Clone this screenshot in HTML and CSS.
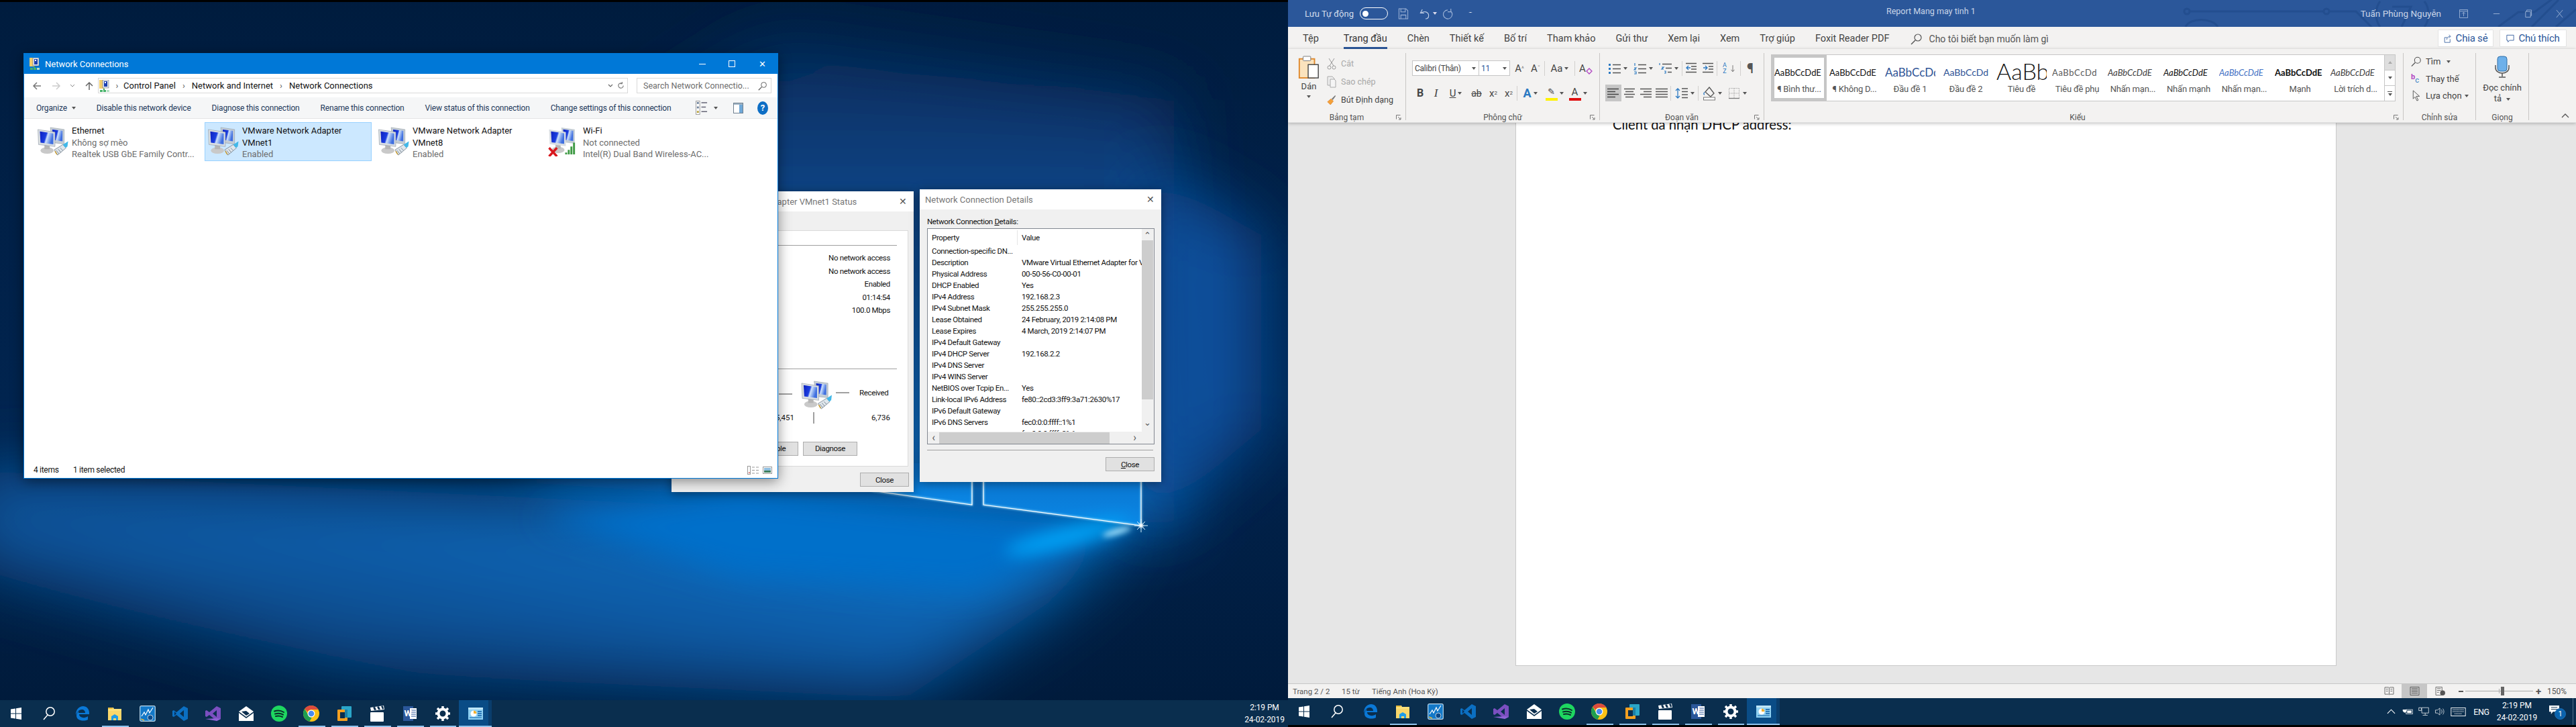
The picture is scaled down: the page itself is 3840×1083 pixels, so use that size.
FILE: index.html
```html
<!DOCTYPE html>
<html lang="vi">
<head>
<meta charset="utf-8">
<title>Network Connections and Word</title>
<link rel="stylesheet" href="styles.css">
</head>
<body>
<svg class="defs" width="0" height="0" aria-hidden="true">
<defs>
<linearGradient id="scr" x1="0" y1="0" x2="1" y2="0.3"><stop offset="0" stop-color="#0a1fc0"/><stop offset=".5" stop-color="#1c3fe0"/><stop offset=".62" stop-color="#cfe2fb"/><stop offset="1" stop-color="#3f6fe0"/></linearGradient>
<symbol id="net" viewBox="0 0 48 46">
<polygon points="20,2 41,5 41,27 23,25" fill="#c5ced6" stroke="#8e99a3" stroke-width=".6"/><polygon points="23,5 38.5,7 38.5,23 24,21" fill="url(#scr)"/>
<ellipse cx="15" cy="37" rx="10" ry="5" fill="#c9c9c9"/><rect x="11" y="28" width="8" height="7" fill="#b5b5b5"/>
<polygon points="1,5 27,9 27,31 2,28" fill="#d8dde2" stroke="#8e99a3" stroke-width=".6"/><polygon points="4,8 24.5,11 24.5,27.5 5,25" fill="url(#scr)"/>
<polygon points="26,36 39,28 44,33 31,44" fill="#dfe6ec" stroke="#6d7a86" stroke-width=".8"/><path d="M29 37l4 5M32 35l4 5M35 33l4 4" stroke="#7d8a96" stroke-width="1"/><polygon points="39,28 47,23 46,31 43,33" fill="#42b8e8"/><path d="M27 38l3 5" stroke="#c99b2c" stroke-width="1.5"/>
</symbol>
<symbol id="cpl" viewBox="0 0 17 18"><rect x="0" y="0" width="7" height="13" fill="#f3cf6d"/><rect x="5" y="0" width="9" height="12" fill="#dfe6ee" stroke="#556" stroke-width=".5"/><rect x="7" y="2" width="5" height="8" fill="#1b3fb0"/><rect x="8" y="3" width="2" height="2" fill="#fff"/><rect x="6" y="13" width="2" height="2" fill="#4aa85f"/><rect x="1" y="15" width="4" height="3" fill="#47b36b"/><rect x="6" y="15" width="4" height="3" fill="#47b36b"/><rect x="11" y="15" width="4" height="3" fill="#b4e0c2"/></symbol>
<symbol id="win" viewBox="0 0 24 24"><polygon points="4,5.5 11,4.5 11,11.5 4,11.5" fill="#fff"/><polygon points="12,4.3 20,3 20,11.5 12,11.5" fill="#fff"/><polygon points="4,12.5 11,12.5 11,19.5 4,18.5" fill="#fff"/><polygon points="12,12.5 20,12.5 20,21 12,19.8" fill="#fff"/></symbol>
<symbol id="srch" viewBox="0 0 24 24"><circle cx="14" cy="9" r="6.2" fill="none" stroke="#fff" stroke-width="1.5"/><path d="M10 14l-6 7" stroke="#fff" stroke-width="1.5"/></symbol>
<symbol id="edge" viewBox="0 0 24 24"><path d="M3 14C3 6 8 1 14 1c5 0 9 4 9 10v2H8c0 5 8 7 13 3v5c-6 3-17 2-17-6 0-3 2-6 4-7-1 1-1 2-1 3h10c0-3-2-5-5-5-5 0-7 4-9 8z" fill="#0a78d7"/></symbol>
<symbol id="expl" viewBox="0 0 24 24"><path d="M2 3h8l1 2h11v17H2z" fill="#fbe07a"/><rect x="2" y="3" width="7" height="2" fill="#e8b93a"/><rect x="2" y="8" width="20" height="14" fill="#f9d76a"/><path d="M7 22v-6l5-3 5 3v6h-3v-3h-4v3z" fill="#1e9ce8"/></symbol>
<symbol id="xtu" viewBox="0 0 24 24"><rect x=".7" y=".7" width="22.6" height="22.6" rx="2" fill="#1278c8" stroke="#bcd9ec" stroke-width="1.2"/><path d="M3 16l4-6 2 4 4-8 2 5 5-8" fill="none" stroke="#fff" stroke-width="1.2"/><circle cx="16" cy="18" r="4" fill="#0b4a8a" stroke="#fff" stroke-width=".7"/><path d="M2 20l5 2" stroke="#e6b73a" stroke-width="1.4"/></symbol>
<symbol id="code" viewBox="0 0 24 24"><path d="M17 1l6 3v16l-6 3L6 14l-4 3-2-1V8l2-1 4 3zM17 7l-6 5 6 5z" fill="#0b6fc2"/><path d="M3 9v6l3-3z" fill="#082f5a"/></symbol>
<symbol id="vs" viewBox="0 0 24 24"><path d="M17 1l6 3v16l-6 3L6 14l-4 3-2-1V8l2-1 4 3zM17 7l-6 5 6 5z" fill="#7b4fc0"/><path d="M0 20l17 3 6-3-6-1z" fill="#8f63d6"/></symbol>
<symbol id="mail" viewBox="0 0 24 24"><path d="M12 1l11 8-11 8L1 9z" fill="#fff"/><path d="M1 11l11 8 11-8v12H1z" fill="#fff"/><path d="M5 9l7-1 5 4-5 3z" fill="#0b2e4e"/></symbol>
<symbol id="spot" viewBox="0 0 24 24"><ellipse cx="12" cy="12" rx="12" ry="12" fill="#1ed760"/><path d="M5 8.5c5-1.5 10-1 14 1.5M6 12.5c4-1 9-.7 12 1.2M7 16c3-.8 7-.5 10 1" fill="none" stroke="#0b2e2a" stroke-width="2" stroke-linecap="round"/></symbol>
<symbol id="chrome" viewBox="0 0 24 24"><circle cx="12" cy="12" r="12" fill="#fbc116"/><path d="M12 0a12 12 0 0 1 10.4 6H12a6 6 0 0 0-5.5 3.6L2.2 5A12 12 0 0 1 12 0z" fill="#dd4b3e"/><path d="M2.2 5l5 8.5a6 6 0 0 0 5.4 4.5L9.500 23.700A12 12 0 0 1 2.200 5z" fill="#1e9e50"/><circle cx="12" cy="12" r="5.500" fill="#fff"/><circle cx="12" cy="12" r="4.300" fill="#4a8bf0"/></symbol>
<symbol id="vmw" viewBox="0 0 24 24"><rect x="8" y="1" width="15" height="17" rx="1" fill="#2aa6c8"/><rect x="2" y="6" width="15" height="17" rx="1" fill="#f5a020"/><rect x="6" y="10" width="7" height="9" fill="#0b2e4e"/><rect x="13" y="6" width="4" height="12" fill="#1d7fa6"/></symbol>
<symbol id="clap" viewBox="0 0 24 24"><rect x="2" y="10" width="20" height="14" rx="1" fill="#fff"/><polygon points="2,3 22,0 23,6 3,8" fill="#fff"/><polygon points="6,2.500 9,2 11,6.600 8,7" fill="#0b2e4e"/><polygon points="12,1.700 15,1.200 17,5.900 14,6.300" fill="#0b2e4e"/><polygon points="18,.800 21,.400 22,5.300 20,5.600" fill="#0b2e4e"/></symbol>
<symbol id="gear" viewBox="0 0 24 24"><circle cx="12" cy="12" r="6.500" fill="none" stroke="#fff" stroke-width="4"/><path d="M12 1v5M12 18v5M1 12h5M18 12h5M4 4l4 4M16 16l4 4M20 4l-4 4M8 16l-4 4" stroke="#fff" stroke-width="3.500"/></symbol>
<symbol id="ctrl" viewBox="0 0 24 24"><rect x="1" y="3" width="22" height="18" fill="#8ed0f2"/><rect x="1" y="3" width="22" height="3" fill="#bfe6f8"/><circle cx="9" cy="12" r="4.500" fill="#fff"/><path d="M9 12V7.500A4.500 4.500 0 0 1 13.500 12z" fill="#f4b02e"/><path d="M15 9h6M15 12h6M15 15h6" stroke="#0e5ea8" stroke-width="1.500"/><path d="M3 18h18" stroke="#0e5ea8"/></symbol>
<symbol id="lines" viewBox="0 0 20 16"><path d="M1 1.500h18M1 5.500h18M1 9.500h18M1 13.500h18" stroke="#555" stroke-width="1.300"/></symbol>
<symbol id="center" viewBox="0 0 20 16"><path d="M2 1.500h16M4 5.500h12M2 9.500h16M4 13.500h12" stroke="#555" stroke-width="1.300"/></symbol>
<symbol id="right" viewBox="0 0 20 16"><path d="M2 1.500h17M7 5.500h12M2 9.500h17M7 13.500h12" stroke="#555" stroke-width="1.300"/></symbol>
<symbol id="left" viewBox="0 0 20 16"><path d="M1 1.500h17M1 5.500h12M1 9.500h17M1 13.500h12" stroke="#444" stroke-width="1.300"/></symbol>
<symbol id="bul" viewBox="0 0 20 18"><rect x="1" y="2" width="3" height="3" fill="#2b79c2"/><rect x="1" y="8" width="3" height="3" fill="#2b79c2"/><rect x="1" y="14" width="3" height="3" fill="#2b79c2"/><path d="M7 3.500h12M7 9.500h12M7 15.500h12" stroke="#555" stroke-width="1.300"/></symbol>
<symbol id="num" viewBox="0 0 20 18"><path d="M2 1v4M1 8h3l-3 3h3M1 14h3v3H1" fill="none" stroke="#2b79c2" stroke-width="1.200"/><path d="M7 3.500h12M7 9.500h12M7 15.500h12" stroke="#555" stroke-width="1.300"/></symbol>
<symbol id="multi" viewBox="0 0 20 18"><path d="M1 1v3M4 7h3l-3 3h3M8 13h2v3H8" fill="none" stroke="#2b79c2" stroke-width="1.200"/><path d="M5 2.500h14M10 8.500h9M13 14.500h6" stroke="#555" stroke-width="1.300"/></symbol>
<symbol id="out" viewBox="0 0 18 18"><path d="M1 1.500h16M9 6h8M9 10h8M1 14.500h16" stroke="#555" stroke-width="1.300"/><path d="M8 8H2m3-3L2 8l3 3" fill="none" stroke="#2b79c2" stroke-width="1.300"/></symbol>
<symbol id="ind" viewBox="0 0 18 18"><path d="M1 1.500h16M10 6h7M10 10h7M1 14.500h16" stroke="#555" stroke-width="1.300"/><path d="M2 8h6M5 5l3 3-3 3" fill="none" stroke="#2b79c2" stroke-width="1.300"/></symbol>
<symbol id="sort" viewBox="0 0 20 20"><path d="M15 2v15m-4-4l4 5 4-5" fill="none" stroke="#555" stroke-width="1.300"/></symbol>
<symbol id="spacing" viewBox="0 0 20 18"><path d="M4 2v14M1 5l3-3 3 3M1 13l3 3 3-3" fill="none" stroke="#2b79c2" stroke-width="1.300"/><path d="M10 2h9M10 6.500h9M10 11h9M10 15.500h9" stroke="#555" stroke-width="1.300"/></symbol>
<symbol id="shade" viewBox="0 0 20 22"><path d="M10 2l7 9-5 5-8-7z" fill="none" stroke="#555" stroke-width="1.300"/><path d="M3 9c-2 3-1 4 0 4" fill="none" stroke="#2b79c2" stroke-width="1.300"/><rect x="1.500" y="17" width="17" height="4" fill="#fff" stroke="#777"/></symbol>
<symbol id="bord" viewBox="0 0 18 18"><path d="M1.500 1.500h15v15h-15zM9 1.500v15M1.500 9h15" fill="none" stroke="#aaa" stroke-dasharray="1.500 1"/><path d="M1 16.500h16" stroke="#777" stroke-width="1.300"/></symbol>
<symbol id="launch" viewBox="0 0 8 8"><path d="M.5 6.500v-6h6M3 3l4 4m0-3v3H4" fill="none" stroke="#777"/></symbol>
<symbol id="mag" viewBox="0 0 18 18"><circle cx="11" cy="7" r="5" fill="none" stroke="#555" stroke-width="1.200"/><path d="M7 11l-6 6" stroke="#555" stroke-width="1.500"/></symbol>
</defs>
</svg>

<section class="screen screen-left">
  <main class="desktop">
    <svg class="wall" viewBox="0 3 1920 1040" preserveAspectRatio="none" aria-hidden="true">
      <defs>
        <linearGradient id="wbase" x1="0" y1="0" x2="0" y2="1"><stop offset="0" stop-color="#001c3e"/><stop offset=".55" stop-color="#01244f"/><stop offset="1" stop-color="#001a3a"/></linearGradient>
        <linearGradient id="wup" x1="0" y1="0" x2="0" y2="1"><stop offset="0" stop-color="#062c5c"/><stop offset=".5" stop-color="#0a4f98"/><stop offset="1" stop-color="#0a7ad6"/></linearGradient>
        <linearGradient id="wbeam" x1="1" y1="0" x2="0" y2="1"><stop offset="0" stop-color="#0a84dc"/><stop offset=".5" stop-color="#0a5ca8"/><stop offset="1" stop-color="#03305e"/></linearGradient>
        <linearGradient id="wpane" x1="0" y1="0" x2="0" y2="1"><stop offset="0" stop-color="#0a6fc8"/><stop offset="1" stop-color="#0a88e6"/></linearGradient>
        <filter id="b60" x="-30%" y="-30%" width="160%" height="160%"><feGaussianBlur stdDeviation="50"/></filter>
        <filter id="b25" x="-30%" y="-50%" width="160%" height="200%"><feGaussianBlur stdDeviation="22"/></filter>
        <filter id="b12" x="-50%" y="-150%" width="200%" height="400%"><feGaussianBlur stdDeviation="12"/></filter>
        <filter id="b4" x="-50%" y="-150%" width="200%" height="400%"><feGaussianBlur stdDeviation="4"/></filter>
        <filter id="b2" x="-30%" y="-30%" width="160%" height="160%"><feGaussianBlur stdDeviation="1.500"/></filter>
      </defs>
      <rect x="0" y="0" width="1920" height="1083" fill="url(#wbase)"/>
      <polygon points="1750,783 1750,150 1150,60 800,300 800,720" fill="url(#wup)" filter="url(#b60)"/>
      <polygon points="1700,250 1880,350 1880,640 1700,790" fill="#0a4f9c" filter="url(#b60)"/>
      <polygon points="1690,785 -60,700 -60,840 500,1000 1350,1040 1560,900" fill="url(#wbeam)" filter="url(#b60)"/>
      <polygon points="1690,785 1100,730 800,770 1100,860 1450,880" fill="#0070ca" filter="url(#b25)"/>
      <polygon points="1701,783 1466,752 1466,690 1701,690" fill="url(#wpane)"/>
      <polygon points="1449,752 1100,704 1100,690 1449,690" fill="url(#wpane)"/>
      <ellipse cx="1590" cy="800" rx="95" ry="14" transform="rotate(-14 1590 800)" fill="#00a4f8" filter="url(#b12)"/>
      <ellipse cx="1665" cy="792" rx="22" ry="4" transform="rotate(-16 1665 792)" fill="#b0e8ff" filter="url(#b4)"/>
      <g filter="url(#b2)" stroke="#9fe2ff" stroke-width="2" fill="none"><path d="M1701 680v103L1466 752v-70M1449 682v70L1300 731"/></g>
      <g stroke="#fff" stroke-width="1.200" fill="none"><path d="M1701 680v103L1466 752v-70M1449 682v70L1300 731"/></g>
      <path d="M1701 773v20M1691 783h20M1695 777l12 12M1707 777l-12 12" stroke="#dff6ff" stroke-width="1" />
      <circle cx="1701" cy="783" r="3" fill="#fff" filter="url(#b2)"/>
    </svg>

    <article class="dlg dlg-status">
      <header class="dlg-title"><span class="dlg-name">VMware Network Adapter VMnet1 Status</span><span class="dlg-x">✕</span></header>
      <div class="st-panel">
        <hr class="rule rule-a">
        <div class="st-row">No network access</div>
        <div class="st-row">No network access</div>
        <div class="st-row">Enabled</div>
        <div class="st-row">01:14:54</div>
        <div class="st-row">100.0 Mbps</div>
        <hr class="rule rule-b">
        <div class="act-top">
          <span class="act-dash-l"><i class="dash"></i></span>
          <svg class="act-icon"><use href="#net"/></svg>
          <i class="dash dash-r"></i>
          <span class="act-rec">Received</span>
        </div>
        <div class="act-bot"><span class="act-sent">5,451</span><i class="act-bar"></i><span class="act-recv">6,736</span></div>
        <div class="st-btns"><button class="btn btn-dis">Disable</button><button class="btn btn-dia">Diagnose</button></div>
      </div>
      <div class="dlg-foot"><button class="btn btn-close">Close</button></div>
    </article>

    <article class="dlg dlg-details">
      <header class="dlg-title"><span class="dlg-name">Network Connection Details</span><span class="dlg-x">✕</span></header>
      <div class="det-body">
        <p class="det-label">Network Connection <u>D</u>etails:</p>
        <div class="det-list">
          <div class="det-main">
            <div class="det-table">
              <div class="det-head"><span class="c1 hc1">Property</span><span class="c2">Value</span></div>
              <div class="det-tr"><span class="c1">Connection-specific DN...</span><span class="c2"></span></div>
              <div class="det-tr"><span class="c1">Description</span><span class="c2">VMware Virtual Ethernet Adapter for VMnet1</span></div>
              <div class="det-tr"><span class="c1">Physical Address</span><span class="c2">00-50-56-C0-00-01</span></div>
              <div class="det-tr"><span class="c1">DHCP Enabled</span><span class="c2">Yes</span></div>
              <div class="det-tr"><span class="c1">IPv4 Address</span><span class="c2">192.168.2.3</span></div>
              <div class="det-tr"><span class="c1">IPv4 Subnet Mask</span><span class="c2">255.255.255.0</span></div>
              <div class="det-tr"><span class="c1">Lease Obtained</span><span class="c2">24 February, 2019 2:14:08 PM</span></div>
              <div class="det-tr"><span class="c1">Lease Expires</span><span class="c2">4 March, 2019 2:14:07 PM</span></div>
              <div class="det-tr"><span class="c1">IPv4 Default Gateway</span><span class="c2"></span></div>
              <div class="det-tr"><span class="c1">IPv4 DHCP Server</span><span class="c2">192.168.2.2</span></div>
              <div class="det-tr"><span class="c1">IPv4 DNS Server</span><span class="c2"></span></div>
              <div class="det-tr"><span class="c1">IPv4 WINS Server</span><span class="c2"></span></div>
              <div class="det-tr"><span class="c1">NetBIOS over Tcpip En...</span><span class="c2">Yes</span></div>
              <div class="det-tr"><span class="c1">Link-local IPv6 Address</span><span class="c2">fe80::2cd3:3ff9:3a71:2630%17</span></div>
              <div class="det-tr"><span class="c1">IPv6 Default Gateway</span><span class="c2"></span></div>
              <div class="det-tr"><span class="c1">IPv6 DNS Servers</span><span class="c2">fec0:0:0:ffff::1%1</span></div>
              <div class="det-tr"><span class="c1"></span><span class="c2">fec0:0:0:ffff::2%1</span></div>
            </div>
            <div class="vscroll"><span class="sarrow">⌃</span><i class="vthumb"></i><span class="sarrow sarrow-d">⌄</span></div>
          </div>
          <div class="hscroll"><span class="harrow">‹</span><i class="hthumb"></i><span class="harrow harrow-r">›</span></div>
        </div>
        <hr class="rule rule-c">
        <div class="det-foot"><button class="btn btn-close"><u>C</u>lose</button></div>
      </div>
    </article>

    <article class="explorer">
      <header class="ex-title">
        <svg class="ex-ticon"><use href="#cpl"/></svg><span class="ex-name">Network Connections</span>
        <span class="ex-ctrls"><i class="wc-min"></i><i class="wc-max"></i><span class="wc-x">✕</span></span>
      </header>
      <nav class="ex-nav">
        <svg class="nav-b" viewBox="0 0 14 14"><path d="M13 7H2m5-5L2 7l5 5" fill="none" stroke="#777" stroke-width="1.500"/></svg>
        <svg class="nav-f" viewBox="0 0 14 14"><path d="M1 7h11M7 2l5 5-5 5" fill="none" stroke="#ccc" stroke-width="1.500"/></svg>
        <svg class="nav-d" viewBox="0 0 8 6"><path d="M1 1l3 3 3-3" fill="none" stroke="#888"/></svg>
        <svg class="nav-u" viewBox="0 0 14 14"><path d="M7 13V2M2 7l5-5 5 5" fill="none" stroke="#666" stroke-width="1.500"/></svg>
        <div class="addr">
          <svg class="addr-ic"><use href="#cpl"/></svg>
          <span class="cr cr-first">›</span><span>Control Panel</span><span class="cr">›</span><span>Network and Internet</span><span class="cr">›</span><span>Network Connections</span>
          <span class="addr-end"><svg class="addr-dd" viewBox="0 0 8 6"><path d="M1 1l3 3 3-3" fill="none" stroke="#666" stroke-width="1.200"/></svg><svg class="addr-rf" viewBox="0 0 14 14"><path d="M11 7a4 4 0 1 1-2-3.500M9 1v3H6" fill="none" stroke="#777" stroke-width="1.200"/></svg></span>
        </div>
        <div class="ex-search"><span>Search Network Connectio...</span><svg class="s-mag"><use href="#mag"/></svg></div>
      </nav>
      <div class="ex-cmds">
        <span class="cmd">Organize <i class="caret caret-dk"></i></span><span class="cmd">Disable this network device</span><span class="cmd">Diagnose this connection</span><span class="cmd">Rename this connection</span><span class="cmd">View status of this connection</span><span class="cmd">Change settings of this connection</span>
        <span class="cmd-icons">
          <svg class="ci-view" viewBox="0 0 19 22"><rect x=".5" y=".5" width="6" height="21" fill="#fff" stroke="#999"/><rect x="2" y="2" width="3" height="3" fill="#6b7f99"/><rect x="2" y="9" width="3" height="3" fill="#6b7f99"/><rect x="2" y="16" width="3" height="3" fill="#b7a13c"/><path d="M9 3h9M9 10h7M9 17h9" stroke="#667" stroke-width="1.500"/></svg>
          <i class="caret caret-dk ci-caret"></i>
          <svg class="ci-pane" viewBox="0 0 15 16"><rect x=".5" y=".5" width="14" height="15" fill="#fff" stroke="#6f7f8f"/><rect x="9" y="1" width="5" height="14" fill="#6fa8d8"/><rect x="1" y="1" width="13" height="2" fill="#9fb3c4"/></svg>
          <span class="ci-help">?</span>
        </span>
      </div>
      <div class="ex-tiles">
        <div class="tile"><svg class="tile-ic"><use href="#net"/></svg><div class="tile-txt"><b>Ethernet</b><span>Không sợ mèo</span><span>Realtek USB GbE Family Contr...</span></div></div>
        <div class="tile tile-sel"><svg class="tile-ic"><use href="#net"/></svg><div class="tile-txt"><b>VMware Network Adapter</b><b>VMnet1</b><span>Enabled</span></div></div>
        <div class="tile"><svg class="tile-ic"><use href="#net"/></svg><div class="tile-txt"><b>VMware Network Adapter</b><b>VMnet8</b><span>Enabled</span></div></div>
        <div class="tile tile-wifi"><svg class="tile-ic" viewBox="0 0 48 46"><g transform="scale(.98)"><polygon points="20,2 41,5 41,27 23,25" fill="#c5ced6"/><polygon points="23,5 38.500,7 38.500,23 24,21" fill="url(#scr)"/><ellipse cx="15" cy="37" rx="10" ry="5" fill="#c9c9c9"/><rect x="11" y="28" width="8" height="7" fill="#b5b5b5"/><polygon points="1,5 27,9 27,31 2,28" fill="#d8dde2"/><polygon points="4,8 24.500,11 24.500,27.500 5,25" fill="url(#scr)"/></g><path d="M1 33l12 13M13 33L1 46" stroke="#d8181e" stroke-width="3.500"/><path d="M27 43v-3M31 43V36M35 43V31M39 43V25" stroke="#3f9a44" stroke-width="3"/></svg><div class="tile-txt"><b>Wi-Fi</b><span>Not connected</span><span>Intel(R) Dual Band Wireless-AC...</span></div></div>
      </div>
      <footer class="ex-status"><span class="ex-s1">4 items</span><span>1 item selected</span>
        <span class="ex-views"><svg class="ev-a" viewBox="0 0 17 13"><rect x=".5" y=".5" width="4" height="12" fill="#fff" stroke="#999"/><rect x="2" y="9.500" width="1.500" height="1.500" fill="#c33"/><path d="M7 2h4M13 2h4M7 6.500h4M13 6.500h4M7 11h4M13 11h4" stroke="#999"/></svg><svg class="ev-b" viewBox="0 0 14 11"><rect x=".5" y=".5" width="13" height="10" fill="#fff" stroke="#999"/><rect x="2" y="2" width="10" height="7" fill="#8fbfe0"/><rect x="2" y="6" width="10" height="3" fill="#3f7f5f"/></svg></span>
      </footer>
    </article>
  </main>
  <footer class="taskbar tb-left">
    <span class="tb"><svg class="ti"><use href="#win"/></svg></span>
    <span class="tb"><svg class="ti"><use href="#srch"/></svg></span>
    <span class="tb"><svg class="ti"><use href="#edge"/></svg></span>
    <span class="tb tb-on"><svg class="ti"><use href="#expl"/></svg></span>
    <span class="tb"><svg class="ti"><use href="#xtu"/></svg></span>
    <span class="tb"><svg class="ti"><use href="#code"/></svg></span>
    <span class="tb"><svg class="ti"><use href="#vs"/></svg></span>
    <span class="tb"><svg class="ti"><use href="#mail"/></svg></span>
    <span class="tb"><svg class="ti"><use href="#spot"/></svg></span>
    <span class="tb tb-on"><svg class="ti"><use href="#chrome"/></svg></span>
    <span class="tb tb-on"><svg class="ti"><use href="#vmw"/></svg></span>
    <span class="tb tb-on"><svg class="ti"><use href="#clap"/></svg></span>
    <span class="tb tb-on"><svg class="ti" viewBox="0 0 24 24"><rect x="2" y="1" width="15" height="22" fill="#2b579a"/><rect x="12" y="4" width="10" height="16" fill="#fff"/><path d="M14 7h7M14 10h7M14 13h7M14 16h7" stroke="#2b579a"/><text class="word-w" x="3.500" y="16">W</text></svg></span>
    <span class="tb tb-on"><svg class="ti"><use href="#gear"/></svg></span>
    <span class="tb tb-act"><svg class="ti"><use href="#ctrl"/></svg></span>
    <span class="tb-clock clock-left"><span>2:19 PM</span><span>24-02-2019</span></span>
  </footer>
</section>

<section class="screen screen-right">
  <div class="word">
    <header class="w-title">
      <svg class="w-deco" viewBox="0 0 586 40" aria-hidden="true"><g fill="none" stroke="#234e8f" stroke-width="3"><circle cx="6" cy="17" r="4"/><path d="M10 17h200"/><circle cx="214" cy="17" r="4"/><path d="M218 17h40l24 24M4 40c6-14 40-14 48 0"/><path d="M294 2c-8 10-8 28 0 38M360 2c8 10 8 28 0 38M312 10h28l-14 30"/><path d="M470 40l30-22h24l30-22M520 40l40-40M586 14l-30 26"/></g></svg>
      <span class="w-auto">Lưu Tự động</span>
      <span class="w-toggle"><i></i></span>
      <svg class="q q-save" viewBox="0 0 16 18"><path d="M1 1h11l3 3v13H1zM4 1v5h7V1M4 17v-6h8v6" fill="none" stroke="#9db3d6" stroke-width="1.100"/></svg>
      <svg class="q q-undo" viewBox="0 0 16 18"><path d="M4 2L1 8h6M2 8c5-4 12-2 12 4 0 3-2 5-5 5" fill="none" stroke="#c2d0e6" stroke-width="1.200"/></svg>
      <i class="caret caret-wh q-car"></i>
      <svg class="q q-redo" viewBox="0 0 16 18"><path d="M12 1v5H7M12 5a7 7 0 1 1-5-2" fill="none" stroke="#9db3d6" stroke-width="1.200"/></svg>
      <span class="q-more"></span>
      <span class="w-doc">Report Mang may tinh 1</span>
      <span class="w-user">Tuấn Phùng Nguyễn</span>
      <span class="w-ctrls">
        <svg class="wc wc1" viewBox="0 0 14 14"><path d="M.5.5h13v13H.5zM.5 3h13M7 11V5M4.500 7L7 4.500 9.500 7" fill="none" stroke="#9db3d6"/></svg>
        <svg class="wc wc2" viewBox="0 0 14 14"><path d="M2 7h10" stroke="#9db3d6"/></svg>
        <svg class="wc wc3" viewBox="0 0 14 14"><path d="M3 3.500h8v9H3zM5 3.500V1h7.500v9H11" fill="none" stroke="#9db3d6"/></svg>
        <svg class="wc wc4" viewBox="0 0 14 14"><path d="M2 1l10 12M12 1L2 13" stroke="#9db3d6"/></svg>
      </span>
    </header>
    <nav class="w-tabs">
      <span class="w-tab">Tệp</span><span class="w-tab w-tab-on">Trang đầu</span><span class="w-tab">Chèn</span><span class="w-tab">Thiết kế</span><span class="w-tab">Bố trí</span><span class="w-tab">Tham khảo</span><span class="w-tab">Gửi thư</span><span class="w-tab">Xem lại</span><span class="w-tab">Xem</span><span class="w-tab">Trợ giúp</span><span class="w-tab">Foxit Reader PDF</span>
      <span class="w-tell"><svg class="tell-ic"><use href="#mag"/></svg>Cho tôi biết bạn muốn làm gì</span>
      <span class="w-share"><span class="sbtn sbtn-a"><svg class="sb-ic" viewBox="0 0 14 16"><path d="M1 6h5M1 6v9h10V9M5 10c0-4 3-6 6-6M9 1l3 3-3 3" fill="none" stroke="#2b579a"/></svg>Chia sẻ</span><span class="sbtn sbtn-b"><svg class="sb-ic" viewBox="0 0 14 14"><path d="M1 1h12v9H6l-3 3v-3H1z" fill="none" stroke="#2b579a"/></svg>Chú thích</span></span>
    </nav>
    <div class="ribbon">
      <section class="grp g-clip">
        <div class="clip-body">
          <div class="paste">
            <svg class="paste-ic" viewBox="0 0 32 36"><rect x="1" y="5" width="24" height="30" fill="#fbe3bd" stroke="#e0892c" stroke-width="2"/><rect x="7" y="1" width="12" height="7" rx="1" fill="#fff" stroke="#777"/><rect x="15" y="14" width="16" height="21" fill="#fff" stroke="#444" stroke-width="1.500"/></svg>
            <span class="paste-t">Dán</span><i class="caret caret-dk"></i>
          </div>
          <div class="clip-list">
            <span class="cl-row cl-off"><svg class="cl-ic" viewBox="0 0 14 18"><path d="M3 1l7 11M11 1L4 12" stroke="#999" fill="none"/><circle cx="3.500" cy="14.500" r="2.500" fill="none" stroke="#999"/><circle cx="10.500" cy="14.500" r="2.500" fill="none" stroke="#999"/></svg>Cắt</span>
            <span class="cl-row cl-off"><svg class="cl-ic" viewBox="0 0 14 18"><path d="M1 1h7l3 3v10H1z" fill="#eee" stroke="#aaa"/><path d="M5 5h6l2 2v10H5z" fill="#f5f5f5" stroke="#aaa"/></svg>Sao chép</span>
            <span class="cl-row"><svg class="cl-ic" viewBox="0 0 16 18"><path d="M14 1L8 7l2 2 5-7z" fill="#777"/><path d="M7 7l4 4-5 6-5-5z" fill="#f4a13a" stroke="#d97a1a" stroke-width=".7"/></svg>Bút Định dạng</span>
          </div>
        </div>
        <span class="glabel">Bảng tạm</span><svg class="launch lc1"><use href="#launch"/></svg>
      </section>

      <section class="grp g-font">
        <div class="row row1">
          <span class="fbox fbox-name">Calibri (Thân)<i class="caret caret-dk"></i></span><span class="fbox fbox-size">11<i class="caret caret-dk"></i></span>
          <span class="tool w24 ml2">A<sup class="mini">^</sup></span><span class="tool w24">A<sup class="mini">ˇ</sup></span><i class="vr"></i>
          <span class="tool w42">Aa<i class="caret caret-dk"></i></span><i class="vr"></i>
          <span class="tool w30">A<svg class="eraser" viewBox="0 0 10 10"><path d="M5 1l4 4-4 4-4-4z" fill="none" stroke="#b146c2" stroke-width="1.300"/></svg></span>
        </div>
        <div class="row row2">
          <span class="tool w24 t-b">B</span><span class="tool w23 t-i">I</span><span class="tool w36 t-u"><u>U</u><i class="caret caret-dk"></i></span><span class="tool w26 t-s"><s>ab</s></span><span class="tool w24">x<sub class="sm">2</sub></span><span class="tool w22">x<sup class="sm">2</sup></span><i class="vr"></i>
          <span class="tool w36 t-ae">A<i class="caret caret-dk"></i></span><span class="tool w36"><span class="t-hl">✎</span><i class="caret caret-dk"></i></span><span class="tool w34"><span class="t-red">A</span><i class="caret caret-dk"></i></span>
        </div>
        <span class="glabel">Phông chữ</span><svg class="launch lc1"><use href="#launch"/></svg>
      </section>

      <section class="grp g-para">
        <div class="row row1">
          <span class="tool w37"><svg class="pi"><use href="#bul"/></svg><i class="caret caret-dk"></i></span><span class="tool w38"><svg class="pi"><use href="#num"/></svg><i class="caret caret-dk"></i></span><span class="tool w38"><svg class="pi"><use href="#multi"/></svg><i class="caret caret-dk"></i></span><i class="vr"></i>
          <span class="tool w24"><svg class="pi pi-s"><use href="#out"/></svg></span><span class="tool w25"><svg class="pi pi-s"><use href="#ind"/></svg></span><i class="vr"></i>
          <span class="tool w32"><span class="az">A<br>Z</span><svg class="pi pi-ar"><use href="#sort"/></svg></span><i class="vr"></i>
          <span class="tool w26 t-pil">¶</span>
        </div>
        <div class="row row2">
          <span class="tool w24 t-on"><svg class="pa"><use href="#left"/></svg></span><span class="tool w24"><svg class="pa"><use href="#center"/></svg></span><span class="tool w24"><svg class="pa"><use href="#right"/></svg></span><span class="tool w24"><svg class="pa"><use href="#lines"/></svg></span><i class="vr"></i>
          <span class="tool w38"><svg class="pi"><use href="#spacing"/></svg><i class="caret caret-dk"></i></span><i class="vr"></i>
          <span class="tool w38"><svg class="pi pi-t"><use href="#shade"/></svg><i class="caret caret-dk"></i></span><span class="tool w36"><svg class="pi"><use href="#bord"/></svg><i class="caret caret-dk"></i></span>
        </div>
        <span class="glabel">Đoạn văn</span><svg class="launch lc1"><use href="#launch"/></svg>
      </section>

      <section class="grp g-styles">
        <div class="gallery">
          <div class="sty sty-on"><span class="s1">AaBbCcDdE</span><span class="sn">¶ Bình thư...</span></div>
          <div class="sty"><span class="s1">AaBbCcDdE</span><span class="sn">¶ Không D...</span></div>
          <div class="sty"><span class="s3">AaBbCcDd</span><span class="sn">Đầu đề 1</span></div>
          <div class="sty"><span class="s4">AaBbCcDd</span><span class="sn">Đầu đề 2</span></div>
          <div class="sty"><span class="s5">AaBbCc</span><span class="sn">Tiêu đề</span></div>
          <div class="sty"><span class="s6">AaBbCcDd</span><span class="sn">Tiêu đề phụ</span></div>
          <div class="sty"><span class="s7">AaBbCcDdE</span><span class="sn">Nhấn mạn...</span></div>
          <div class="sty"><span class="s8">AaBbCcDdE</span><span class="sn">Nhấn mạnh</span></div>
          <div class="sty"><span class="s9">AaBbCcDdE</span><span class="sn">Nhấn mạn...</span></div>
          <div class="sty"><span class="s10">AaBbCcDdE</span><span class="sn">Mạnh</span></div>
          <div class="sty"><span class="s7">AaBbCcDdE</span><span class="sn">Lời trích d...</span></div>
          <div class="g-scroll"><span class="gs gs1"><i class="tri tri-up"></i></span><span class="gs gs2"><i class="caret caret-dk"></i></span><span class="gs gs3"><i class="gs-bar"></i><i class="caret caret-dk"></i></span></div>
        </div>
        <span class="glabel glabel-st">Kiểu</span><svg class="launch lc1"><use href="#launch"/></svg>
      </section>

      <section class="grp g-edit">
        <div class="ed-list">
          <span class="ed-row"><svg class="ed-ic"><use href="#mag"/></svg>Tìm<i class="caret caret-dk ed-car"></i></span>
          <span class="ed-row"><span class="ed-rep"><b>b</b><i>c</i></span>Thay thế</span>
          <span class="ed-row"><svg class="ed-ic" viewBox="0 0 14 18"><path d="M2 1v13l3-3 3 6 2-1-3-6h5z" fill="none" stroke="#555"/></svg>Lựa chọn<i class="caret caret-dk"></i></span>
        </div>
        <span class="glabel">Chỉnh sửa</span>
      </section>

      <section class="grp g-voice">
        <svg class="mic" viewBox="0 0 24 34"><rect x="5" y="1" width="14" height="22" rx="4" fill="#6db0ea" stroke="#2f6ea8"/><path d="M2 14v4c0 5 5 8 10 8s10-3 10-8v-4M12 26v5M7 32h10" fill="none" stroke="#555" stroke-width="1.500"/></svg>
        <span class="v-t">Đọc chính</span><span class="v-t">tả <i class="caret caret-dk"></i></span>
        <span class="glabel">Giọng</span>
      </section>
      <svg class="collapse" viewBox="0 0 12 8"><path d="M1 7l5-5 5 5" fill="none" stroke="#555" stroke-width="1.300"/></svg>
    </div>
    <div class="doc">
      <div class="page"><p class="page-text">Client đã nhận DHCP address:</p></div>
    </div>
    <footer class="w-status">
      <span class="ws1">Trang 2 / 2</span><span class="ws2">15 từ</span><span>Tiếng Anh (Hoa Kỳ)</span>
      <span class="ws-right">
        <span class="wsv"><svg class="wsi" viewBox="0 0 16 14"><path d="M1 1h6l1 1 1-1h6v11H9l-1 1-1-1H1zM8 2v10M3 4h3M3 7h3M10 4h3M10 7h3" fill="none" stroke="#666"/></svg></span>
        <span class="wsv wsv-on"><svg class="wsi" viewBox="0 0 16 14"><path d="M1 .5h14v13H1zM3 3h10M3 5.500h10M3 8h10M3 10.500h10" fill="none" stroke="#555"/></svg></span>
        <span class="wsv"><svg class="wsi" viewBox="0 0 16 14"><path d="M1 .5h10v13H1zM3 3h6M3 6h6M3 9h3" fill="none" stroke="#666"/><circle cx="12" cy="10" r="4" fill="#555"/></svg></span>
        <span class="zm-minus"></span>
        <span class="zm-track"><i class="zm-tick"></i><i class="zm-thumb"></i></span>
        <span class="zm-plus">+</span>
        <span class="zm-val">150%</span>
      </span>
    </footer>
  </div>
  <footer class="taskbar tb-right">
    <span class="tb"><svg class="ti"><use href="#win"/></svg></span>
    <span class="tb"><svg class="ti"><use href="#srch"/></svg></span>
    <span class="tb"><svg class="ti"><use href="#edge"/></svg></span>
    <span class="tb tb-on"><svg class="ti"><use href="#expl"/></svg></span>
    <span class="tb"><svg class="ti"><use href="#xtu"/></svg></span>
    <span class="tb"><svg class="ti"><use href="#code"/></svg></span>
    <span class="tb"><svg class="ti"><use href="#vs"/></svg></span>
    <span class="tb"><svg class="ti"><use href="#mail"/></svg></span>
    <span class="tb"><svg class="ti"><use href="#spot"/></svg></span>
    <span class="tb tb-on"><svg class="ti"><use href="#chrome"/></svg></span>
    <span class="tb tb-on"><svg class="ti"><use href="#vmw"/></svg></span>
    <span class="tb tb-on"><svg class="ti"><use href="#clap"/></svg></span>
    <span class="tb tb-on"><svg class="ti" viewBox="0 0 24 24"><rect x="2" y="1" width="15" height="22" fill="#2b579a"/><rect x="12" y="4" width="10" height="16" fill="#fff"/><path d="M14 7h7M14 10h7M14 13h7M14 16h7" stroke="#2b579a"/><text class="word-w" x="3.500" y="16">W</text></svg></span>
    <span class="tb tb-on"><svg class="ti"><use href="#gear"/></svg></span>
    <span class="tb tb-act"><svg class="ti"><use href="#ctrl"/></svg></span>
    <span class="tray">
      <span class="tr tr1"><svg class="tri-i" viewBox="0 0 14 8"><path d="M1 7l6-6 6 6" fill="none" stroke="#fff" stroke-width="1.200"/></svg></span>
      <span class="tr tr2"><svg class="tri-i2" viewBox="0 0 22 14"><path d="M3 0v3M7 0v3M1 3h8v3L6 9H4L1 6z" fill="#fff"/><rect x="8" y="3" width="13" height="9" fill="none" stroke="#fff"/><rect x="10" y="5" width="9" height="5" fill="#fff"/></svg></span>
      <span class="tr tr3"><svg class="tri-i2" viewBox="0 0 22 18"><path d="M7 1h14v11H7zM1 1h5v6H1zM14 12v4M9 16.500h10" fill="none" stroke="#fff"/></svg></span>
      <span class="tr tr4"><svg class="tri-i2" viewBox="0 0 22 18"><path d="M2 6h4l5-4v14l-5-4H2zM14 5c2 2 2 6 0 8M17 3c3 3 3 9 0 12" fill="none" stroke="#fff"/></svg></span>
      <span class="tr tr5"><svg class="tri-kb" viewBox="0 0 24 14"><rect x=".5" y=".5" width="23" height="13" fill="none" stroke="#fff"/><path d="M3 3.500h18M3 6.500h18M6 10h12" stroke="#fff" stroke-dasharray="1.500 .8"/></svg></span>
      <span class="tr tr6">ENG</span>
      <span class="tr tr7"><span>2:19 PM</span><span>24-02-2019</span></span>
      <span class="tr tr8"><svg class="tri-ac" viewBox="0 0 18 16"><path d="M1 1h16v10H7l-3 4v-4H1z" fill="#fff"/><path d="M4 4h10M4 7h10" stroke="#0b2e4e"/></svg><span class="badge">1</span></span>
      <i class="tr-line"></i>
    </span>
  </footer>
</section>
</body>
</html>
```

FILE: styles.css
```css
* { box-sizing: border-box; }
html, body { margin: 0; padding: 0; }
body {
  width: 3840px; height: 1083px; display: flex; overflow: hidden; background: #000;
  font-family: Roboto, "Noto Sans", sans-serif; font-size: 12px; color: #1a1a1a;
}
.defs { position: absolute; }
i { font-style: normal; }
.screen { width: 1920px; display: flex; flex-direction: column; }
.screen-left { height: 1083px; padding-top: 3px; }
.screen-right { height: 1080px; }
.desktop { position: relative; flex: 1; overflow: hidden; background: #012047; }
.wall { position: absolute; left: 0; top: 0; width: 1920px; height: 1040px; }

/* taskbar */
.taskbar { height: 40px; flex: none; display: flex; align-items: stretch; background: #0a2e4e; color: #fff; }
.tb { width: 48.9px; position: relative; display: flex; align-items: center; justify-content: center; }
.ti { width: 24px; height: 24px; }
.tb-on::after, .tb-act::after { content: ""; position: absolute; left: 5px; right: 4px; bottom: 0; height: 2px; background: #8fc4ee; }
.tb-act { background: linear-gradient(90deg, #0a4c86 0 44px, #0a3d6c 44px); }
.tb-act::after { left: 0; right: 0; }
.word-w { font: bold 13px Roboto, sans-serif; fill: #fff; }
.tb-clock { margin-left: auto; width: 64px; margin-right: 3px; display: flex; flex-direction: column; align-items: center; justify-content: center; gap: 5px; font-size: 12px; line-height: 13px; letter-spacing: -.1px; }
.tray { margin-left: auto; display: flex; align-items: stretch; padding-right: 4px; }
.tr { display: flex; align-items: center; justify-content: center; font-size: 12.5px; }
.tr1 { width: 24px; } .tr2 { width: 25px; } .tr3 { width: 24px; } .tr4 { width: 23px; } .tr5 { width: 32px; } .tr6 { width: 38px; font-size: 12.5px; letter-spacing: -.3px; }
.tr7 { width: 68px; flex-direction: column; gap: 5px; line-height: 13px; font-size: 12px; }
.tr8 { width: 48px; position: relative; }
.tri-i { width: 13px; height: 8px; } .tri-i2 { width: 16px; height: 14px; } .tri-kb { width: 23px; height: 13px; } .tri-ac { width: 17px; height: 15px; margin: -6px 6px 0 0; }
.badge { position: absolute; left: 22px; top: 15px; width: 17px; height: 17px; border-radius: 50%; background: #0a63ad; color: #fff; font-size: 11px; line-height: 15px; text-align: center; border: 1px solid #1d6fb5; }
.tr-line { width: 1px; background: #51708c; margin-left: 1px; }

/* dialogs */
.dlg { position: absolute; background: #f0f0f0; box-shadow: 0 2px 14px rgba(0,0,0,.4); display: flex; flex-direction: column; font-size: 11.5px; letter-spacing: -.35px; color: #111; }
.dlg-status { left: 1001px; top: 282px; width: 361px; height: 448px; }
.dlg-details { left: 1371px; top: 279px; width: 360px; height: 436px; }
.dlg-title { height: 30px; flex: none; background: #fff; display: flex; align-items: center; justify-content: space-between; color: #777; font-size: 13px; letter-spacing: 0; }
.dlg-status .dlg-title { padding: 0 8px 0 39px; }
.dlg-details .dlg-title { padding: 0 8px 0 8px; }
.dlg-x { font-size: 14px; color: #555; width: 16px; text-align: center; }
.st-panel { margin: 28px 8px 0 8px; height: 352px; background: #fff; border: 1px solid #dadada; }
.rule { border: 0; height: 1px; background: #a0a0a0; margin: 0; }
.rule-a { margin: 21px 16px 9px 20px; }
.rule-b { margin: 76px 16px 16px 20px; }
.st-row { height: 19.5px; line-height: 19.5px; text-align: right; padding-right: 26px; }
.act-top { display: flex; align-items: flex-start; height: 45px; }
.act-dash-l { width: 171px; text-align: right; padding-top: 18px; line-height: 0; }
.dash { display: inline-block; width: 20px; height: 2px; background: #a0a0a0; }
.dash-r { margin: 18px 0 0 5px; }
.act-icon { width: 47px; height: 45px; margin-left: 13px; }
.act-rec { margin-left: 15px; line-height: 38px; }
.act-bot { display: flex; height: 17px; line-height: 17px; margin-top: 3px; padding-right: 26px; }
.act-sent { width: 174px; text-align: right; letter-spacing: 0; }
.act-bar { width: 2px; background: #a0a0a0; margin-left: 28px; }
.act-recv { margin-left: auto; letter-spacing: 0; }
.st-btns { display: flex; gap: 7px; padding-left: 107px; margin-top: 27px; }
.btn { height: 21px; padding: 0; background: #e1e1e1; border: 1px solid #adadad; font: inherit; letter-spacing: inherit; color: #111; }
.btn-dis { width: 73px; } .btn-dia { width: 81px; } .btn-close { width: 73px; }
.dlg-foot { display: flex; justify-content: flex-end; padding: 9px 7px 0 0; }
.det-body { padding: 0 10px 0 11px; flex: 1; }
.det-label { margin: 10px 0 2px; height: 16px; line-height: 16px; }
.det-list { height: 322px; background: #f0f0f0; border: 1px solid #828790; overflow: hidden; }
.det-main { display: flex; height: 302px; }
.det-table { width: 319px; background: #fff; overflow: hidden; white-space: nowrap; }
.det-head { height: 25px; display: flex; align-items: center; }
.det-tr { height: 17px; line-height: 17px; display: flex; }
.c1 { width: 134px; padding-left: 6px; flex: none; }
.hc1 { height: 22px; line-height: 22px; border-right: 1px solid #e5e5e5; }
.c2 { padding-left: 6px; flex: none; }
.vscroll { width: 17px; background: #f0f0f0; position: relative; display: flex; flex-direction: column; align-items: center; }
.sarrow { height: 17px; font-size: 13px; line-height: 20px; color: #555; }
.sarrow-d { margin-top: auto; line-height: 8px; }
.vthumb { width: 17px; height: 237px; background: #cdcdcd; }
.hscroll { height: 18px; display: flex; align-items: center; background: #f0f0f0; }
.harrow { width: 17px; text-align: center; font-size: 16px; line-height: 16px; color: #555; }
.harrow-r { margin-left: auto; margin-right: 20px; }
.hthumb { width: 254px; height: 17px; background: #cdcdcd; }
.rule-c { margin: 8px 2px 0 0; }
.det-foot { display: flex; justify-content: flex-end; margin-top: 10px; }

/* explorer */
.explorer { position: absolute; left: 35px; top: 76px; width: 1125px; height: 634px; background: #fff; border: 1px solid #0078d7; box-shadow: 0 4px 18px rgba(0,0,0,.45); display: flex; flex-direction: column; font-size: 13px; color: #111; }
.ex-title { height: 30px; flex: none; background: #0078d7; color: #fff; display: flex; align-items: center; padding-left: 8px; }
.ex-ticon { width: 17px; height: 18px; margin-right: 6px; }
.ex-name { font-size: 13px; }
.ex-ctrls { margin-left: auto; display: flex; align-items: center; }
.wc-min { width: 10px; height: 1px; background: #fff; margin-right: 34px; }
.wc-max { width: 10px; height: 10px; border: 1px solid #fff; margin-right: 35px; }
.wc-x { width: 12px; margin-right: 16px; font-size: 13px; }
.ex-nav { height: 35px; flex: none; display: flex; align-items: center; }
.nav-b { width: 14px; height: 14px; margin-left: 12px; }
.nav-f { width: 14px; height: 14px; margin-left: 15px; }
.nav-d { width: 8px; height: 6px; margin-left: 13px; }
.nav-u { width: 14px; height: 14px; margin-left: 14px; }
.addr { margin-left: 6px; width: 790px; height: 23px; border: 1px solid #d9d9d9; display: flex; align-items: center; padding-left: 1px; }
.addr-ic { width: 17px; height: 18px; }
.cr { width: 24px; text-align: center; color: #555; }
.cr-first { width: 19px; }
.addr-end { margin-left: auto; height: 21px; width: 32px; display: flex; align-items: center; }
.addr-dd { width: 8px; height: 6px; margin: 0 5px 0 3px; }
.addr-rf { width: 13px; height: 13px; padding-left: 0; }
.ex-search { margin-left: 13px; width: 201px; height: 23px; border: 1px solid #d9d9d9; display: flex; align-items: center; justify-content: space-between; padding: 0 5px 0 9px; color: #6d6d6d; font-size: 12.5px; }
.s-mag { width: 14px; height: 14px; }
.ex-cmds { height: 32px; flex: none; background: #f5f6f7; border-bottom: 1px solid #e5e5e5; display: flex; align-items: center; padding-left: 18px; gap: 31px; font-size: 12px; letter-spacing: -.17px; color: #1e395b; }
.cmd { white-space: nowrap; }
.caret { display: inline-block; width: 0; height: 0; border-left: 3px solid transparent; border-right: 3px solid transparent; vertical-align: middle; margin-left: 4px; }
.caret-dk { border-top: 4px solid #555; }
.caret-wh { border-top: 4px solid #dde; }
.cmd-icons { margin-left: auto; display: flex; align-items: center; padding-right: 14px; }
.ci-view { width: 18px; height: 21px; }
.ci-caret { margin: 0 0 0 9px; }
.ci-pane { width: 15px; height: 16px; margin-left: 23px; }
.ci-help { width: 16px; height: 20px; margin-left: 21px; border-radius: 50%; background: #0d6ec5; color: #fff; font-weight: 700; font-size: 13px; line-height: 20px; text-align: center; letter-spacing: 0; }
.ex-tiles { flex: 1; display: flex; padding: 5px 0 0 15px; gap: 5px; }
.tile { width: 249px; height: 58px; display: flex; border: 1px solid transparent; padding: 5px 0 0 3px; }
.tile-sel { background: #cce8ff; border-color: #99d1ff; }
.tile-ic { width: 48px; height: 45px; flex: none; }
.tile-txt { margin-left: 4px; margin-top: -2px; display: flex; flex-direction: column; line-height: 17.5px; white-space: nowrap; }
.tile-txt b { font-weight: 400; color: #111; }
.tile-txt span { color: #6d6d6d; }
.ex-status { height: 24px; flex: none; display: flex; align-items: center; padding-left: 14px; font-size: 12px; letter-spacing: -.3px; }
.ex-s1 { width: 59px; }
.ex-views { margin-left: auto; display: flex; align-items: center; gap: 6px; padding-right: 8px; }
.ev-a { width: 17px; height: 13px; } .ev-b { width: 14px; height: 11px; }

/* word */
.word { height: 1040px; display: flex; flex-direction: column; background: #e6e6e6; }
.w-title { height: 40px; flex: none; background: #2b579a; position: relative; overflow: hidden; display: flex; align-items: center; color: #d5deec; padding-left: 25px; }
.w-deco { position: absolute; left: 1334px; top: 0; width: 586px; height: 40px; }
.w-auto { font-size: 13px; width: 82px; white-space: nowrap; position: relative; }
.w-toggle { width: 42px; height: 18px; border: 1.5px solid #fff; border-radius: 9px; display: flex; align-items: center; padding-left: 3px; }
.w-toggle i { width: 9px; height: 9px; background: #fff; border-radius: 50%; }
.q { width: 16px; height: 17px; }
.q-save { margin-left: 15px; } .q-undo { margin-left: 16px; } .q-car { margin-left: 4px; } .q-redo { margin-left: 9px; }
.q-more { width: 6px; height: 5px; border-top: 1px solid #fff; border-left: 3px solid transparent; border-right: 3px solid transparent; margin-left: 22px; }
.w-doc { position: relative; margin-left: 617px; margin-top: -8px; font-size: 12.5px; color: #c9d5e8; white-space: nowrap; }
.w-user { position: relative; margin-left: auto; font-size: 13.5px; white-space: nowrap; color: #c9d5e8; letter-spacing: 0; }
.w-ctrls { position: relative; display: flex; align-items: center; margin-left: 27px; margin-right: 18px; }
.wc { width: 13px; height: 13px; }
.wc2 { margin-left: 36px; } .wc3 { margin-left: 34px; } .wc4 { margin-left: 34px; }
.w-tabs { height: 33px; flex: none; background: #f3f2f1; display: flex; align-items: stretch; padding-left: 22px; gap: 30px; font-size: 14.5px; color: #444; }
.w-tab { line-height: 36px; white-space: nowrap; }
.w-tab:first-child { margin-right: 7px; }
.w-tab-on { box-shadow: inset 0 -3px 0 #2b579a; color: #333; }
.w-tell { display: flex; align-items: center; margin-left: 1px; font-size: 14px; color: #555; white-space: nowrap; padding-top: 3px; }
.tell-ic { width: 18px; height: 18px; margin-right: 10px; }
.w-share { margin-left: auto; display: flex; gap: 9px; padding: 4px 14px 3px 0; font-size: 15px; color: #2b579a; }
.sbtn { background: #fff; border: 1px solid #e3e3e3; display: flex; align-items: center; justify-content: center; gap: 6px; border-radius: 1px; letter-spacing: -.2px; }
.sbtn-a { width: 83px; } .sbtn-b { width: 100px; }
.sb-ic { width: 12px; height: 13px; }
.ribbon { height: 110px; flex: none; background: #f3f2f1; display: flex; align-items: flex-start; padding-top: 6px; position: relative; z-index: 2; box-shadow: 0 1px 5px rgba(0,0,0,.25); border-bottom: 1px solid #ddd; color: #444; }
.grp { height: 100px; border-right: 1px solid #c8c6c4; position: relative; flex: none; display: flex; flex-direction: column; }
.g-clip { width: 176px; } .g-font { width: 289px; padding: 11px 0 0 9px; } .g-para { width: 245px; padding: 11px 0 0 8px; }
.g-styles { width: 953px; padding: 2px 0 0 10px; } .g-edit { width: 108px; } .g-voice { width: 79px; align-items: center; padding-top: 4px; }
.glabel { position: absolute; left: 0; right: 0; bottom: -4px; height: 16px; line-height: 16px; text-align: center; font-size: 12px; color: #555; white-space: nowrap; }
.glabel-st { right: 18px; }
.launch { position: absolute; right: 6px; bottom: 0; width: 8px; height: 8px; }
.clip-body { display: flex; }
.paste { width: 44px; margin-left: 9px; display: flex; flex-direction: column; align-items: center; padding-top: 4px; }
.paste-ic { width: 32px; height: 34px; }
.paste-t { font-size: 13px; margin-top: 4px; }
.paste .caret { margin: 6px 0 0; }
.clip-list { margin-left: 5px; display: flex; flex-direction: column; padding-top: 2px; }
.cl-row { height: 27px; display: flex; align-items: center; white-space: nowrap; font-size: 12.5px; }
.cl-off { color: #a8a8a8; }
.cl-ic { width: 14px; height: 18px; margin-right: 7px; }
.row { display: flex; align-items: center; }
.row1 { height: 23px; }
.row2 { height: 25px; margin-top: 13px; }
.fbox { background: #fff; border: 1px solid #c6c6c6; height: 23px; display: flex; align-items: center; justify-content: space-between; padding: 0 4px 0 3px; font-size: 12px; white-space: nowrap; letter-spacing: -.25px; }
.fbox-name { width: 100px; } .fbox-size { width: 46px; border-left: 0; color: #2b579a; }
.tool { height: 100%; display: flex; align-items: center; justify-content: center; flex: none; font-size: 15px; color: #444; position: relative; }
.tool .caret { margin-left: 3px; }
.w22 { width: 22px; } .w23 { width: 23px; } .w24 { width: 24px; } .w25 { width: 25px; } .w26 { width: 26px; } .w30 { width: 30px; } .w32 { width: 32px; } .w34 { width: 34px; } .w36 { width: 36px; } .w37 { width: 37px; } .w38 { width: 38px; } .w42 { width: 42px; }
.ml2 { margin-left: 2px; }
.mini { font-size: 9px; color: #777; line-height: 0; }
.sm { font-size: 8px; }
.vr { width: 1px; height: 22px; background: #d2d0ce; flex: none; margin: 0 1px; }
.eraser { width: 10px; height: 10px; margin-top: 8px; }
.t-b { font-weight: 700; font-size: 16px; } .t-i { font-style: italic; font-family: "Liberation Serif", serif; font-size: 17px; } .t-u { font-size: 15px; } .t-s { font-size: 14px; }
.t-ae { color: #2b79c2; font-weight: 700; font-size: 18px; }
.t-hl { border-bottom: 4px solid #fff200; line-height: 18px; font-size: 13px; width: 18px; text-align: center; }
.t-red { border-bottom: 4px solid #e01010; line-height: 18px; width: 18px; text-align: center; }
.t-on { background: #c6c6c6; }
.pi { width: 20px; height: 18px; flex: none; }
.pi-s { width: 18px; }
.pi-t { height: 22px; }
.pi-ar { width: 12px; height: 20px; }
.pa { width: 20px; height: 16px; }
.az { font-size: 9px; line-height: 9px; color: #2b79c2; text-align: center; }
.t-pil { font-size: 20px; font-weight: 700; color: #555; }
.gallery { width: 931px; height: 70px; background: #fff; border: 1px solid #c6c6c6; display: flex; }
.sty { width: 83px; flex: none; display: flex; flex-direction: column; align-items: center; overflow: hidden; border: 4px solid transparent; white-space: nowrap; }
.sty-on { border-color: #c6c6c6; width: 82px; }
.sty > :first-child { height: 38px; line-height: 44px; width: 100%; overflow: hidden; text-align: left; font-family: Lato, "Noto Sans", sans-serif; font-size: 13px; color: #111; }
.sty .s3 { font-size: 17px; color: #2f5496; }
.sty .s4 { font-size: 14px; color: #2f5496; padding-left: 4px; }
.sty .s5 { font-size: 34px; font-weight: 300; color: #111; line-height: 40px; }
.sty .s6 { color: #5a5a5a; letter-spacing: .6px; }
.sty .s7 { font-style: italic; color: #404040; }
.sty .s8 { font-style: italic; color: #111; }
.sty .s9 { font-style: italic; color: #4472c4; }
.sty .s10 { font-weight: 700; color: #111; }
.sn { font-size: 13px; color: #555; line-height: 18px; letter-spacing: -.2px; }
.g-scroll { width: 16px; margin-left: auto; display: flex; flex-direction: column; border-left: 1px solid #c6c6c6; }
.gs { flex: 1; display: flex; flex-direction: column; align-items: center; justify-content: center; gap: 2px; border-bottom: 1px solid #c6c6c6; }
.gs1 { background: #dedede; }
.gs3 { border-bottom: 0; }
.gs .caret { margin: 0; }
.gs-bar { width: 7px; height: 1px; background: #555; }
.tri { width: 0; height: 0; border-left: 3px solid transparent; border-right: 3px solid transparent; }
.tri-up { border-bottom: 4px solid #aaa; }
.ed-list { display: flex; flex-direction: column; padding: 0 0 0 11px; }
.ed-row { height: 25.5px; display: flex; align-items: center; white-space: nowrap; font-size: 13px; }
.ed-ic { width: 16px; height: 17px; margin-right: 6px; }
.ed-car { margin-left: 9px; }
.ed-rep { width: 16px; margin-right: 6px; display: flex; font-size: 11px; line-height: 12px; }
.ed-rep b { color: #b146c2; }
.ed-rep i { color: #2b79c2; padding-top: 5px; }
.mic { width: 24px; height: 34px; flex: none; }
.v-t { font-size: 13px; line-height: 16px; margin-top: 6px; white-space: nowrap; }
.v-t + .v-t { margin-top: 0; }
.collapse { position: absolute; right: 10px; bottom: 6px; width: 12px; height: 8px; }
.doc { flex: 1; overflow: hidden; padding-left: 339px; min-height: 0; }
.page { width: 1224px; height: 809px; background: #fff; border: 1px solid #c9c9c9; border-top: 0; display: flow-root; }
.page-text { margin: -11px 0 0 144px; font-family: Lato, "Noto Sans", sans-serif; font-size: 20.2px; line-height: 26px; color: #111; white-space: nowrap; }
.w-status { height: 22px; flex: none; background: #f3f2f1; border-top: 1px solid #c6c6c6; display: flex; align-items: center; padding-left: 7px; font-size: 11.5px; color: #555; }
.ws1 { width: 73px; } .ws2 { width: 45px; }
.ws-right { margin-left: auto; display: flex; align-items: center; height: 100%; padding-right: 8px; }
.wsv { width: 38px; height: 100%; display: flex; align-items: center; justify-content: center; }
.wsv-on { background: #c6c6c6; }
.wsi { width: 15px; height: 13px; }
.zm-minus { width: 7px; height: 2px; background: #555; margin: 0 3px 0 9px; }
.zm-track { width: 101px; height: 1px; background: #aaa; position: relative; }
.zm-tick { position: absolute; left: 50px; top: -3px; width: 1px; height: 7px; background: #aaa; }
.zm-thumb { position: absolute; left: 53px; top: -6px; width: 5px; height: 13px; background: #666; }
.zm-plus { width: 16px; text-align: center; font-size: 15px; font-weight: 700; }
.zm-val { width: 35px; margin-left: 5px; font-size: 12px; }
```
